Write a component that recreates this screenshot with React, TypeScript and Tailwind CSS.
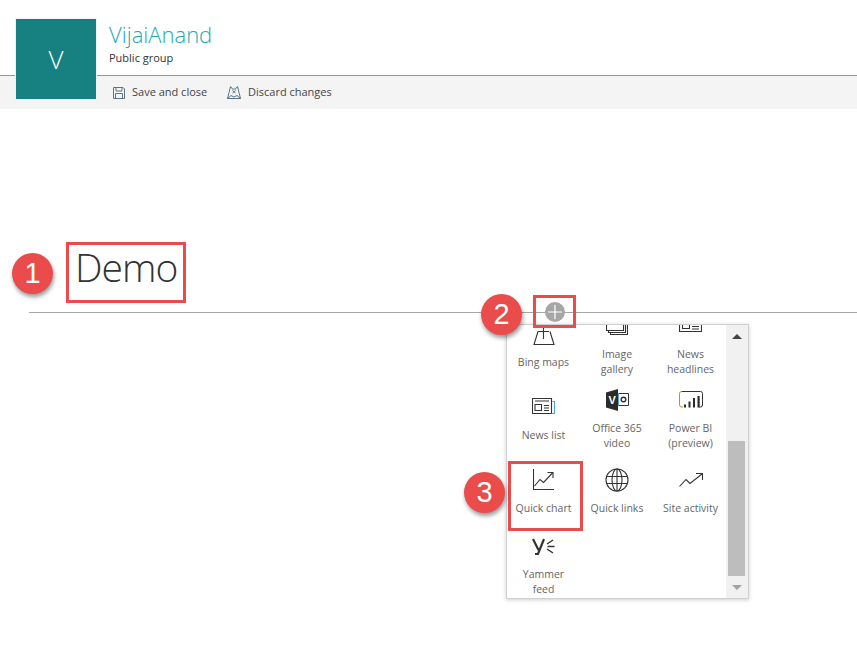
const font = { fontFamily: '"Open Sans", sans-serif' };

function SaveIcon() {
  return (
    <svg width="12" height="12" viewBox="0 0 12 12" fill="none" stroke="#5b7485" strokeWidth="1">
      <path d="M.5.5h9.500l1.500 1.500v9.500H.5z" />
      <path d="M3 .5v3.500h6V.5" />
      <path d="M2.500 11.500V6.500h7v5" />
    </svg>
  );
}

function DiscardIcon() {
  return (
    <svg width="14" height="13" viewBox="0 0 14 13" fill="none" stroke="#5b7485" strokeWidth="1">
      <path d="M.5 12.500h13L12 6.500 10.500.5 8 3.500 7 2.500l-1 1L3.500.5 2 6.500z" />
      <path d="M.5 12.500l3.500-3 3 1.500 3-1.500 3.500 3" />
      <path d="M5.500 4.500l3 2.500M8.500 4.500l-3 2.500" />
    </svg>
  );
}

function BingIcon() {
  return (
    <svg width="22" height="20" viewBox="0 0 22 20" fill="none" className="mt-[9px]">
      <path d="M10.500 0v14" stroke="#333" strokeWidth="1.100" />
      <path d="M5 6.500h11" stroke="#333" />
      <path d="M5 6.500L1 19.500h20l-4-13" stroke="#333" strokeWidth="1.100" />
    </svg>
  );
}

function GalleryIcon() {
  return (
    <svg width="22" height="14" viewBox="0 0 22 14" fill="none" stroke="#333" strokeWidth="1.100" className="mt-[5px]">
      <path d="M.5 0v9.500h17V0" />
      <path d="M2.500 9.500v2h17V0" />
      <path d="M4.500 11.500v2h17V0" />
    </svg>
  );
}

function HeadlinesIcon() {
  return (
    <svg width="23" height="10" viewBox="0 0 23 10" fill="none" stroke="#333" strokeWidth="1.100" className="mt-[6px]">
      <path d="M.5 0v9.500h22V0" />
      <path d="M3.500 1.500h7v5h-7z" />
      <path d="M13 2h7M13 4.500h7M13 7h7" />
    </svg>
  );
}

function NewsListIcon() {
  return (
    <svg width="23" height="16" viewBox="0 0 23 16" fill="none" stroke="#333" strokeWidth="1.100" className="mt-[9px]">
      <path d="M.5.500h19v15H.5z" />
      <path d="M20.500 3.500h2v12h-3" stroke="#4aa5e0" />
      <path d="M3 3h14M3 6.500h6.500v6H3z" />
      <path d="M12 7.500h5M12 10h5M12 12.500h5" />
    </svg>
  );
}

function VideoIcon() {
  return (
    <svg width="23" height="22" viewBox="0 0 23 22">
      <path d="M0 3.500L12 0v22L0 18.500z" fill="#2b2b2b" />
      <text x="2.500" y="14.500" fontSize="11" fontWeight="700" fill="#fff" fontFamily="Liberation Sans">V</text>
      <path d="M12.500 4.500h10v12h-10" fill="none" stroke="#333" />
      <path d="M12.500 4v13" stroke="#4aa5e0" />
      <circle cx="17.500" cy="10.500" r="2.300" fill="none" stroke="#333" strokeWidth="1.400" />
    </svg>
  );
}

function PowerBiIcon() {
  return (
    <svg width="24" height="17" viewBox="0 0 24 17" fill="none" className="mt-[2px]">
      <path d="M2.500.5h19" stroke="#333" />
      <path d="M4 16H2.500a2 2 0 01-2-2V2.500a2 2 0 012-2" stroke="#c98a2a" />
      <path d="M20 16h1.500a2 2 0 002-2V2.500a2 2 0 00-2-2" stroke="#333" />
      <path d="M6 16.500v-3M10.500 16.500v-6M15 16.500V7M19.500 16.500V5" stroke="#2b2b2b" strokeWidth="2" />
      <path d="M20.500 16.500V5" stroke="#2a6fbf" strokeWidth="0.700" />
    </svg>
  );
}

function QuickChartIcon() {
  return (
    <svg width="21" height="21" viewBox="0 0 21 21" fill="none" stroke="#333" strokeWidth="1.100" className="mt-[7px]">
      <path d="M.5 0v20.500H21" />
      <path d="M1.500 17l5.500-6.500 3.500 3L19.500 4" />
      <path d="M14.500 3.500h5.500V9" />
    </svg>
  );
}

function GlobeIcon() {
  return (
    <svg width="24" height="24" viewBox="0 0 24 24" fill="none" stroke="#333" strokeWidth="1.100" className="mt-[6px]">
      <circle cx="12" cy="12" r="11" />
      <ellipse cx="12" cy="12" rx="5" ry="11" />
      <path d="M1.500 8.500h21M1.500 15.500h21" />
      <path d="M12 1v22" />
    </svg>
  );
}

function ActivityIcon() {
  return (
    <svg width="24" height="14" viewBox="0 0 24 14" fill="none" stroke="#333" strokeWidth="1.100" className="mt-[11px]">
      <path d="M.5 13.500L7 6.500l4 4L23 1" />
      <path d="M17 .500h6.500V7" />
    </svg>
  );
}

function YammerIcon() {
  return (
    <svg width="23" height="20" viewBox="0 0 23 20" fill="none" stroke="#333" className="mt-[1px]">
      <path d="M1 3l5.500 11M12 3L6 18H3" strokeWidth="2.200" />
      <path d="M15 8l6-4M15.500 10.500h7M15 13l6 4" strokeWidth="1.500" />
    </svg>
  );
}

const tiles = [
  { label: 'Bing maps', icon: <BingIcon />, nudge: '' },
  { label: 'Image gallery', icon: <GalleryIcon />, nudge: '' },
  { label: 'News headlines', icon: <HeadlinesIcon />, nudge: '' },
  { label: 'News list', icon: <NewsListIcon />, nudge: '' },
  { label: 'Office 365 video', icon: <VideoIcon />, nudge: 'pt-[2px]' },
  { label: 'Power BI (preview)', icon: <PowerBiIcon />, nudge: 'pt-[2px]' },
  { label: 'Quick chart', icon: <QuickChartIcon />, nudge: '' },
  { label: 'Quick links', icon: <GlobeIcon />, nudge: '' },
  { label: 'Site activity', icon: <ActivityIcon />, nudge: '' },
  { label: 'Yammer feed', icon: <YammerIcon />, nudge: 'pt-[2px]' },
];

function Callout({ n, className }: { n: number; className: string }) {
  return (
    <div
      className={`absolute flex h-[41px] w-[41px] items-center justify-center rounded-full bg-[#ea4b4b] text-[29px] leading-none text-white shadow-[1px_3px_4px_rgba(0,0,0,0.4)] ${className}`}
      style={{ fontFamily: '"Liberation Sans", sans-serif' }}
    >
      {n}
    </div>
  );
}

export default function App() {
  return (
    <div className="relative h-[649px] w-[857px] overflow-hidden bg-white" style={font}>
      {/* Site header */}
      <header className="flex h-[76px] border-b border-[#8f9c9c] pl-[15px] pt-[18px]">
        <div className="relative z-10 flex h-[82px] w-[82px] shrink-0 items-center justify-center border border-[#eef2f2] bg-[#178080] text-[26px] font-light text-white">
          V
        </div>
        <div className="ml-[12px] mt-[-1px]">
          <div className="text-[22px] font-light leading-[34px] text-[#1fa9ae]">VijaiAnand</div>
          <div className="text-[11px] leading-[13px] text-[#333]">Public group</div>
        </div>
      </header>

      {/* Command bar */}
      <div className="flex h-[33px] items-center bg-[#f4f4f4] pl-[113px] text-[11px] text-[#444]">
        <SaveIcon />
        <span className="ml-[7px] w-[76px] whitespace-nowrap">Save and close</span>
        <span className="ml-[19px]"><DiscardIcon /></span>
        <span className="ml-[7px] whitespace-nowrap">Discard changes</span>
      </div>

      {/* Page title */}
      <div className="ml-[75px] mt-[131px] h-[72px] text-[39px] font-light leading-[54px] tracking-[-1px] text-[#333]">Demo</div>

      {/* Section divider with the web part picker */}
      <div className="relative ml-[29px] border-t border-[#a6a6a6]">
        <button className="absolute left-[516px] top-[-11px] flex h-[20px] w-[20px] items-center justify-center rounded-full bg-[#a6a6a6]">
          <svg width="14" height="14" viewBox="0 0 14 14" stroke="#fff" strokeWidth="1.200">
            <path d="M7 0v14M0 7h14" />
          </svg>
        </button>

        <div className="absolute left-[477px] top-[11px] flex h-[275px] w-[243px] border border-[#d0d0d0] bg-white shadow-[0_1px_4px_rgba(0,0,0,0.2)]">
          <div className="h-full w-[219px] overflow-hidden">
            <div className="mt-[-9px] grid grid-cols-[73px_74px_73px] grid-rows-[73px_73px_73px_73px]">
              {tiles.map((t) => (
                <div key={t.label} className="flex flex-col items-center">
                  <div className="flex h-[31px] w-full items-start justify-center">{t.icon}</div>
                  <div className={`flex h-[30px] w-[64px] items-center justify-center text-center text-[10.500px] leading-[15px] text-[#666] ${t.nudge}`}>
                    {t.label}
                  </div>
                </div>
              ))}
            </div>
          </div>
          <div className="flex w-[22px] flex-col bg-[#f1f1f1] pl-[2px] pr-[3px]">
            <div className="flex h-[24px] items-center justify-center">
              <div className="h-0 w-0 border-x-[5px] border-b-[5px] border-x-transparent border-b-[#444]" />
            </div>
            <div className="mt-[92px] h-[136px] bg-[#bdbdbd]" />
            <div className="mt-auto flex h-[22px] items-center justify-center">
              <div className="h-0 w-0 border-x-[5px] border-t-[5px] border-x-transparent border-t-[#a3a3a3]" />
            </div>
          </div>
        </div>
      </div>

      {/* Numbered annotations pasted over the screenshot */}
      <div className="absolute left-[66px] top-[242px] h-[61px] w-[120px] border-[3px] border-[#ea4b4b]" />
      <div className="absolute left-[533px] top-[295px] h-[33px] w-[43px] border-[3px] border-[#ea4b4b]" />
      <div className="absolute left-[508px] top-[461px] h-[70px] w-[75px] border-[3px] border-[#ea4b4b]" />
      <Callout n={1} className="left-[12px] top-[253px]" />
      <Callout n={2} className="left-[481px] top-[294px]" />
      <Callout n={3} className="left-[464px] top-[472px]" />
    </div>
  );
}
